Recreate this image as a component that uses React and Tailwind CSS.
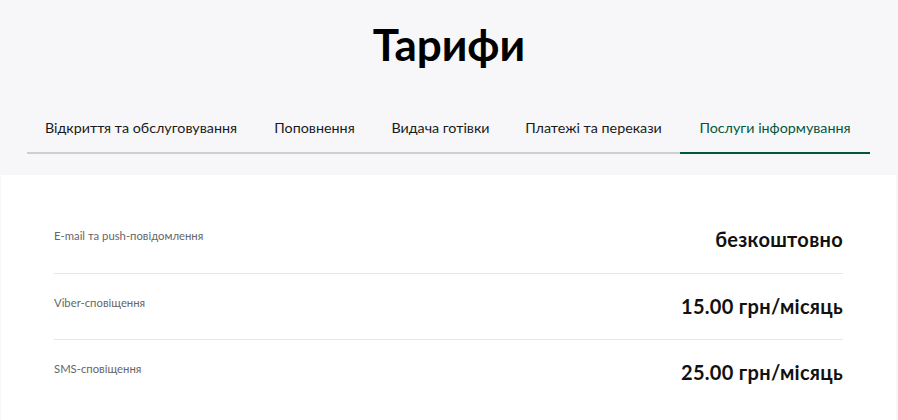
export default function App() {
  const tabs = [
    ["Відкриття та обслуговування", "w-[228px]"],
    ["Поповнення", "w-[119px]"],
    ["Видача готівки", "w-[133px]"],
    ["Платежі та перекази", "w-[173px]"],
    ["Послуги інформування", "w-[190px]"],
  ];
  const rows = [
    ["E-mail та push-повідомлення", "безкоштовно"],
    ["Viber-сповіщення", "15.00 грн/місяць"],
    ["SMS-сповіщення", "25.00 грн/місяць"],
  ];
  return (
    <div className="w-[898px] h-[420px] overflow-hidden bg-[#f7f7f9] font-['Lato',sans-serif] text-black">
      <h1 className="pt-[16px] text-center text-[44px] leading-[56px] font-bold">Тарифи</h1>
      <div className="mt-[46px] flex px-[27px]">
        <div className="flex whitespace-nowrap">
          {tabs.map(([t, w], i) => (
            <div
              key={t}
              className={
                i === tabs.length - 1
                  ? `${w} text-center pb-[14px] text-[14.3px] leading-[20px] text-[#00573f] border-b-2 border-[#00573f]`
                  : `${w} text-center pb-[14px] text-[14.3px] leading-[20px] text-[#1a1a1a] border-b-2 border-[#cfcfd1]`
              }
            >
              {t}
            </div>
          ))}
        </div>
      </div>
      <div className="mt-[21px] ml-px mr-[2px] bg-white px-[53px] pt-[32px] pb-[40px]">
        {rows.map(([l, v], i) => (
          <div
            key={l}
            className={
              i === 0
                ? "flex justify-between items-start pt-[20px] pb-[22px]"
                : "flex justify-between items-start pt-[20px] pb-[21px] border-t border-[#e6e6e8]"
            }
          >
            <span className="mt-[1px] text-[11.3px] leading-[16px] text-[#666]">{l}</span>
            <span className="text-[20px] leading-[24px] font-bold tracking-[0.3px] text-[#111]">{v}</span>
          </div>
        ))}
      </div>
    </div>
  );
}
